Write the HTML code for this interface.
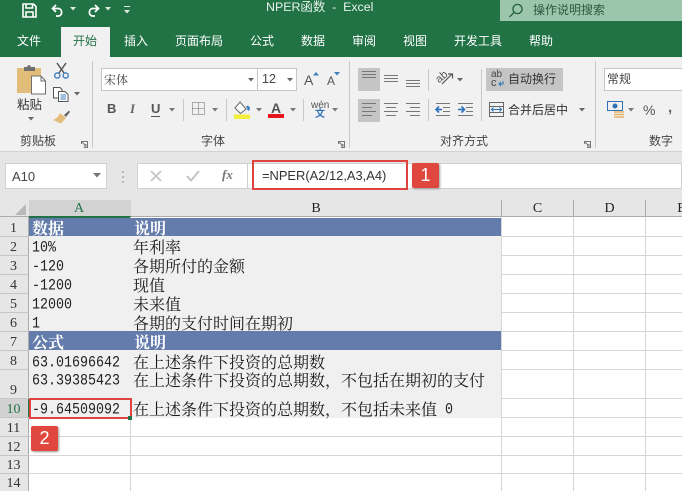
<!DOCTYPE html>
<html><head><meta charset="utf-8">
<style>
*{margin:0;padding:0;box-sizing:border-box}
html,body{width:682px;height:491px;overflow:hidden;background:#fff}
body{position:relative;font-family:"Liberation Sans","Noto Sans CJK SC",sans-serif;color:#333}
.a{position:absolute;white-space:nowrap}
.t{position:absolute;white-space:nowrap;color:#fff;font-size:12px;line-height:16px;top:33px}
.l{position:absolute;white-space:nowrap;color:#444;font-size:12px;line-height:14px}
.hl{position:absolute;background:#c9c9c9}
.gl{position:absolute;background:#d6d6d6}
.r{position:absolute;left:0;width:27px;text-align:center;font:14px/16px "Liberation Serif","Noto Serif CJK SC",serif;color:#333}
.c{position:absolute;white-space:nowrap;font:13.33px/18px "Liberation Mono","Noto Serif CJK SC",monospace;color:#222;transform:scaleY(1.2);transform-origin:left center}
.z{position:absolute;white-space:nowrap;font:16px/18px "Noto Serif CJK SC","Liberation Serif",serif;color:#1a1a1a;left:133px}
.w{color:#fff;font-weight:700;font-size:16px;left:32px}
.ch{position:absolute;top:201px;height:17px;text-align:center;font:14px/16px "Liberation Serif",serif;color:#222}
svg{position:absolute;overflow:visible}
</style></head><body>

<!-- title + tab strip -->
<div class="a" style="left:0;top:0;width:682px;height:57px;background:#217346"></div>
<div class="a" style="left:500px;top:0;width:182px;height:21px;background:#9cc6ac"></div>
<svg style="left:508px;top:2px" width="18" height="16" fill="none" stroke="#1f5f3c" stroke-width="1.3"><circle cx="9.5" cy="7" r="4.6"/><path d="M6 10.5 L1.5 15"/></svg>
<div class="a" style="left:533px;top:2px;font-size:12px;line-height:16px;color:#2c5a40">操作说明搜索</div>
<div class="a" style="left:266px;top:0;font-size:12.4px;line-height:15px;color:#e8f2ec">NPER函数&nbsp; -&nbsp; Excel</div>

<!-- QAT -->
<svg style="left:22px;top:3px" width="15" height="15" fill="none" stroke="#fff" stroke-width="1.6"><path d="M1 1H11.5L14 3.5V14H1Z"/><path d="M4 1V5H10.5V1"/><path d="M4 14V9H11V14"/></svg>
<svg style="left:51px;top:3px" width="14" height="14" fill="none" stroke="#fff" stroke-width="1.7"><path d="M5 2 L1.5 5.5 L5 9"/><path d="M2 5.5 H8 A4 4 0 0 1 8 13 H5"/></svg>
<svg style="left:70px;top:7px" width="6" height="4" fill="#dfe9e3"><path d="M0 0H6L3 3.5Z"/></svg>
<svg style="left:86px;top:3px" width="14" height="14" fill="none" stroke="#fff" stroke-width="1.7"><path d="M9 2 L12.5 5.5 L9 9"/><path d="M12 5.5 H6 A4 4 0 0 0 6 13 H9"/></svg>
<svg style="left:105px;top:7px" width="6" height="4" fill="#dfe9e3"><path d="M0 0H6L3 3.5Z"/></svg>
<svg style="left:124px;top:6px" width="7" height="8" fill="#dfe9e3"><path d="M0 0H6V1H0Z"/><path d="M0 4H6L3 7.5Z"/></svg>

<!-- tabs -->
<div class="a" style="left:61px;top:27px;width:49px;height:31px;background:#f1f1f1"></div>
<div class="t" style="left:17px">文件</div>
<div class="t" style="left:73px;color:#217346">开始</div>
<div class="t" style="left:124px">插入</div>
<div class="t" style="left:175px">页面布局</div>
<div class="t" style="left:250px">公式</div>
<div class="t" style="left:301px">数据</div>
<div class="t" style="left:352px">审阅</div>
<div class="t" style="left:403px">视图</div>
<div class="t" style="left:454px">开发工具</div>
<div class="t" style="left:529px">帮助</div>

<!-- ribbon -->
<div class="a" style="left:0;top:57px;width:682px;height:94px;background:#f1f1f1"></div>
<div class="a" style="left:0;top:151px;width:682px;height:1px;background:#d2d2d2"></div>
<div class="a" style="left:0;top:152px;width:682px;height:48px;background:#e6e6e6"></div>
<div class="hl" style="left:92px;top:61px;width:1px;height:87px"></div>
<div class="hl" style="left:349px;top:61px;width:1px;height:87px"></div>
<div class="hl" style="left:595px;top:61px;width:1px;height:87px"></div>

<!-- clipboard -->
<svg style="left:17px;top:65px" width="29" height="32">
<path d="M0 3H24V28H0Z" fill="#e2bd7a"/>
<path d="M7 2H10Q12-2 14 2H18V6H7Z" fill="#6f6f6f"/>
<path d="M14.5 11H24L28.500 16V29H14.5Z" fill="#fff" stroke="#6f6f6f"/>
<path d="M24 11V16H28.500" fill="none" stroke="#6f6f6f"/>
</svg>
<div class="l" style="left:17px;top:98px;font-size:12.5px;line-height:14px;color:#333">粘贴</div>
<svg style="left:28px;top:117px" width="7" height="4" fill="#666"><path d="M0 0H6L3 3.5Z"/></svg>
<svg style="left:54px;top:63px" width="15" height="16" fill="none">
<path d="M3 0 L10 10 M12 0 L5 10" stroke="#555" stroke-width="1.5"/>
<circle cx="3.3" cy="12.5" r="2.6" stroke="#3f7fbf" stroke-width="1.4"/><circle cx="11.7" cy="12.5" r="2.6" stroke="#3f7fbf" stroke-width="1.4"/>
</svg>
<svg style="left:53px;top:87px" width="16" height="15" fill="#fff" stroke="#555"><path d="M.5.5H7L9 2.5V11H.5Z"/><path d="M5.5 4.5H12L15 7.5V14.5H5.5Z"/><path d="M7.5 8H13M7.5 10H13M7.5 12H13" stroke="#3f7fbf"/></svg>
<svg style="left:74px;top:92px" width="7" height="4" fill="#666"><path d="M0 0H6L3 3.5Z"/></svg>
<svg style="left:53px;top:110px" width="17" height="14"><path d="M11 5 L16 0.5 L17 2 L13 7Z" fill="#666"/><path d="M7 3 L13 8 L8 13.5 L0 10 Q5 8 7 3Z" fill="#e2bd7a"/></svg>
<div class="l" style="left:20px;top:134px;color:#444">剪贴板</div>
<svg style="left:81px;top:141px" width="7" height="7" fill="none" stroke="#777"><path d="M.5 3V.5H6.5V6.5H3"/><path d="M1 1L5 5M3 5H5V3"/></svg>

<!-- font -->
<div class="a" style="left:101px;top:68px;width:196px;height:23px;background:#fff;border:1px solid #c6c6c6"></div>
<div class="a" style="left:257px;top:68px;width:1px;height:23px;background:#c6c6c6"></div>
<div class="a" style="left:104px;top:72px;font:12px/15px 'Noto Serif CJK SC',serif;color:#444">宋体</div>
<svg style="left:248px;top:78px" width="7" height="4" fill="#666"><path d="M0 0H6L3 3.5Z"/></svg>
<div class="a" style="left:262px;top:72px;font-size:12.500px;line-height:15px;color:#444">12</div>
<svg style="left:287px;top:78px" width="7" height="4" fill="#666"><path d="M0 0H6L3 3.5Z"/></svg>
<div class="a" style="left:304px;top:71px;font-size:14px;line-height:18px;color:#555">A</div>
<svg style="left:313px;top:72px" width="6" height="4" fill="#3f7fbf"><path d="M0 3.5H6L3 0Z"/></svg>
<div class="a" style="left:327px;top:74px;font-size:12px;line-height:15px;color:#555">A</div>
<svg style="left:334px;top:72px" width="6" height="4" fill="#3f7fbf"><path d="M0 0H6L3 3.5Z"/></svg>
<div class="a" style="left:107px;top:101px;font-size:13px;line-height:16px;font-weight:700;color:#555">B</div>
<div class="a" style="left:130px;top:101px;font:italic 700 13px/16px 'Liberation Serif',serif;color:#666">I</div>
<div class="a" style="left:151px;top:101px;font-size:13px;line-height:15px;font-weight:700;color:#555;border-bottom:1px solid #555">U</div>
<svg style="left:169px;top:108px" width="7" height="4" fill="#777"><path d="M0 0H6L3 3.5Z"/></svg>
<div class="hl" style="left:183px;top:99px;width:1px;height:22px"></div>
<svg style="left:192px;top:102px" width="13" height="13" fill="none" stroke="#666" stroke-dasharray="1 1"><path d="M.5.5H12.5V12.5H.5ZM6.5.5V12.5M.5 6.5H12.5"/></svg>
<svg style="left:212px;top:108px" width="7" height="4" fill="#777"><path d="M0 0H6L3 3.5Z"/></svg>
<div class="hl" style="left:226px;top:99px;width:1px;height:22px"></div>
<svg style="left:234px;top:101px" width="17" height="18"><path d="M6 1 L12 8 L6.5 12.5 L1 7Z" fill="#fff" stroke="#666"/><path d="M12 5Q15 4 16 7Q16 9 14 10Z" fill="#3f7fbf"/><rect x="0" y="13.500" width="16" height="4.500" fill="#f3ee3a"/></svg>
<svg style="left:256px;top:108px" width="7" height="4" fill="#777"><path d="M0 0H6L3 3.5Z"/></svg>
<div class="a" style="left:271px;top:100px;font-size:14px;line-height:16px;font-weight:700;color:#555">A</div>
<div class="a" style="left:268px;top:114px;width:16px;height:4px;background:#e5141d"></div>
<svg style="left:290px;top:108px" width="7" height="4" fill="#777"><path d="M0 0H6L3 3.5Z"/></svg>
<div class="hl" style="left:303px;top:99px;width:1px;height:22px"></div>
<div class="a" style="left:311px;top:100px;font-size:10px;line-height:12px;color:#555">wén</div>
<div class="a" style="left:315px;top:109px;font-size:10px;line-height:12px;color:#2d72b8;font-weight:700">文</div>
<svg style="left:332px;top:108px" width="7" height="4" fill="#777"><path d="M0 0H6L3 3.5Z"/></svg>
<div class="l" style="left:201px;top:134px">字体</div>
<svg style="left:338px;top:141px" width="7" height="7" fill="none" stroke="#777"><path d="M.5 3V.5H6.5V6.5H3"/><path d="M1 1L5 5M3 5H5V3"/></svg>

<!-- alignment -->
<div class="a" style="left:358px;top:68px;width:22px;height:23px;background:#c5c5c5"></div>
<div class="a" style="left:358px;top:99px;width:22px;height:23px;background:#c5c5c5"></div>
<svg style="left:361px;top:71px" width="90" height="17" fill="none" stroke="#777">
<path d="M1 .5H15M1 3.500H15M1 6.500H15"/><path d="M23 4.500H37M23 7.500H37M23 10.500H37"/><path d="M45 9.500H59M45 12.500H59M45 15.500H59"/></svg>
<svg style="left:361px;top:103px" width="90" height="14" fill="none" stroke="#777">
<path d="M1 .5H15M1 4.500H11M1 8.500H15M1 12.500H11"/><path d="M23 .5H37M25 4.500H35M23 8.500H37M25 12.500H35"/><path d="M45 .5H59M49 4.500H59M45 8.500H59M49 12.500H59"/></svg>
<div class="hl" style="left:428px;top:69px;width:1px;height:22px"></div>
<div class="hl" style="left:428px;top:99px;width:1px;height:22px"></div>
<div class="a" style="left:436px;top:71px;font-size:11px;line-height:13px;color:#555;transform:rotate(-40deg)">ab</div>
<svg style="left:441px;top:72px" width="13" height="13" fill="none" stroke="#555" stroke-width="1.2"><path d="M1 12L11 2M7 2H11.500V6.500"/></svg>
<svg style="left:457px;top:78px" width="6" height="4" fill="#666"><path d="M0 0H6L3 3.5Z"/></svg>
<svg style="left:436px;top:103px" width="14" height="13" fill="none" stroke="#777"><path d="M0 .5H14M7 4.500H14M7 8.500H14M0 12.500H14"/><path d="M0 6.500H6" stroke="#2d72b8" stroke-width="1.600"/><path d="M3 3.500L0 6.500L3 9.500" stroke="#2d72b8" stroke-width="1.600"/></svg>
<svg style="left:458px;top:103px" width="15" height="13" fill="none" stroke="#777"><path d="M0 .5H15M8 4.500H15M8 8.500H15M0 12.500H15"/><path d="M0 6.500H6" stroke="#2d72b8" stroke-width="1.600"/><path d="M3.500 3.500L6.500 6.500L3.500 9.500" stroke="#2d72b8" stroke-width="1.600"/></svg>
<div class="hl" style="left:481px;top:69px;width:1px;height:52px"></div>
<div class="a" style="left:486px;top:68px;width:77px;height:23px;background:#c5c5c5"></div>
<div class="a" style="left:491px;top:70px;font-size:10px;line-height:10px;color:#444">ab</div>
<div class="a" style="left:491px;top:78px;font-size:11px;line-height:10px;color:#444">c</div>
<svg style="left:498px;top:81px" width="6" height="5" fill="none" stroke="#2d72b8"><path d="M5 0V3H1M3 1L1 3L3 5"/></svg>
<div class="a" style="left:508px;top:72px;font-size:12px;line-height:15px;color:#333">自动换行</div>
<svg style="left:489px;top:102px" width="15" height="15" fill="none" stroke="#666"><path d="M.5.5H14.500V14.500H.5ZM.5 4.500H14.500M.5 10.500H14.500"/><path d="M2.500 7.500H12.500M4.500 5.500L2.500 7.500L4.500 9.500M10.500 5.500L12.500 7.500L10.500 9.500" stroke="#2d72b8"/></svg>
<div class="a" style="left:508px;top:103px;font-size:12px;line-height:15px;color:#333">合并后居中</div>
<svg style="left:579px;top:108px" width="7" height="4" fill="#666"><path d="M0 0H6L3 3.5Z"/></svg>
<div class="l" style="left:440px;top:134px">对齐方式</div>
<svg style="left:584px;top:141px" width="7" height="7" fill="none" stroke="#777"><path d="M.5 3V.5H6.5V6.5H3"/><path d="M1 1L5 5M3 5H5V3"/></svg>

<!-- number -->
<div class="a" style="left:604px;top:68px;width:90px;height:23px;background:#fff;border:1px solid #c6c6c6"></div>
<div class="a" style="left:607px;top:72px;font-size:12px;line-height:15px;color:#444">常规</div>
<svg style="left:607px;top:101px" width="17" height="17"><rect x=".5" y=".5" width="15" height="9" fill="none" stroke="#2d72b8"/><circle cx="8" cy="5" r="2.500" fill="#2d72b8"/><path d="M7 11H17M7 13.500H17M7 16H17" stroke="#e2a94f" stroke-width="1.300"/></svg>
<svg style="left:628px;top:108px" width="7" height="4" fill="#777"><path d="M0 0H6L3 3.5Z"/></svg>
<div class="a" style="left:643px;top:102px;font-size:14px;line-height:16px;color:#555">%</div>
<div class="a" style="left:668px;top:100px;font-size:15px;line-height:16px;font-weight:700;color:#666">,</div>
<div class="l" style="left:649px;top:134px">数字</div>

<!-- formula bar -->
<div class="a" style="left:5px;top:163px;width:102px;height:26px;background:#fff;border:1px solid #d0d0d0"></div>
<div class="a" style="left:12px;top:169px;font-size:13px;line-height:15px;color:#444">A10</div>
<svg style="left:93px;top:173px" width="8" height="5" fill="#777"><path d="M0 0H8L4 4.500Z"/></svg>
<div class="a" style="left:122px;top:171px;width:2px;height:2px;background:#bbb;box-shadow:0 5px 0 #bbb,0 10px 0 #bbb"></div>
<div class="a" style="left:137px;top:163px;width:545px;height:26px;background:#fff;border:1px solid #d0d0d0"></div>
<div class="a" style="left:247px;top:163px;width:1px;height:26px;background:#d0d0d0"></div>
<svg style="left:150px;top:170px" width="12" height="12" fill="none" stroke="#c4c4c4" stroke-width="1.800"><path d="M1 1L11 11M11 1L1 11"/></svg>
<svg style="left:186px;top:170px" width="14" height="12" fill="none" stroke="#c4c4c4" stroke-width="2"><path d="M1 6L5 10.500L13 1"/></svg>
<div class="a" style="left:222px;top:167px;font:italic 700 13px/16px 'Liberation Serif',serif;color:#777">fx</div>
<div class="a" style="left:262px;top:168px;font-size:12.900px;line-height:16px;color:#333">=NPER(A2/12,A3,A4)</div>
<div class="a" style="left:252px;top:160px;width:156px;height:30px;border:2px solid #e0433d"></div>
<div class="a" style="left:412px;top:163px;width:27px;height:25px;background:#e0483f;border-radius:2px;box-shadow:1px 1px 2px #999;color:#fff;font-size:18px;line-height:25px;text-align:center">1</div>

<!-- column headers -->
<div class="a" style="left:0;top:200px;width:682px;height:17px;background:#e6e6e6"></div>
<div class="a" style="left:0;top:216px;width:682px;height:1px;background:#ababab"></div>
<div class="a" style="left:29px;top:200px;width:102px;height:17px;background:#d2d2d2"></div>
<div class="a" style="left:29px;top:216px;width:102px;height:2px;background:#217346"></div>
<svg style="left:15px;top:204px" width="11" height="11" fill="#b9b9b9"><path d="M11 0V11H0Z"/></svg>
<div class="ch" style="left:29px;width:100px;color:#217346">A</div>
<div class="ch" style="left:131px;width:370px">B</div>
<div class="ch" style="left:502px;width:71px">C</div>
<div class="ch" style="left:574px;width:71px">D</div>
<div class="ch" style="left:646px;width:71px">E</div>
<div class="a" style="left:501px;top:200px;width:1px;height:17px;background:#ababab"></div>
<div class="a" style="left:573px;top:200px;width:1px;height:17px;background:#ababab"></div>
<div class="a" style="left:645px;top:200px;width:1px;height:17px;background:#ababab"></div>

<!-- row headers -->
<div class="a" style="left:0;top:217px;width:29px;height:274px;background:#e6e6e6;border-right:1px solid #ababab"></div>
<div class="a" style="left:0;top:398px;width:29px;height:19px;background:#d2d2d2;border-right:1px solid #217346"></div>
<div class="gl" style="left:0;top:236px;width:29px;height:1px;background:#c6c6c6;box-shadow:0 19px 0 #c6c6c6,0 38px 0 #c6c6c6,0 57px 0 #c6c6c6,0 76px 0 #c6c6c6,0 95px 0 #c6c6c6,0 114px 0 #c6c6c6,0 133px 0 #c6c6c6,0 162px 0 #c6c6c6,0 181px 0 #c6c6c6,0 200px 0 #c6c6c6,0 219px 0 #c6c6c6,0 237px 0 #c6c6c6"></div>
<div class="r" style="top:221px">1</div><div class="r" style="top:240px">2</div><div class="r" style="top:259px">3</div><div class="r" style="top:278px">4</div><div class="r" style="top:297px">5</div><div class="r" style="top:316px">6</div><div class="r" style="top:335px">7</div><div class="r" style="top:354px">8</div><div class="r" style="top:383px">9</div><div class="r" style="top:402px;color:#217346">10</div><div class="r" style="top:421px">11</div><div class="r" style="top:440px">12</div><div class="r" style="top:458px">13</div><div class="r" style="top:476px">14</div>

<!-- grid -->
<div class="gl" style="left:130px;top:217px;width:1px;height:274px"></div>
<div class="gl" style="left:501px;top:217px;width:1px;height:274px"></div>
<div class="gl" style="left:573px;top:217px;width:1px;height:274px"></div>
<div class="gl" style="left:645px;top:217px;width:1px;height:274px"></div>
<div class="gl" style="left:29px;top:236px;width:653px;height:1px"></div>
<div class="gl" style="left:29px;top:255px;width:653px;height:1px"></div>
<div class="gl" style="left:29px;top:274px;width:653px;height:1px"></div>
<div class="gl" style="left:29px;top:293px;width:653px;height:1px"></div>
<div class="gl" style="left:29px;top:312px;width:653px;height:1px"></div>
<div class="gl" style="left:29px;top:331px;width:653px;height:1px"></div>
<div class="gl" style="left:29px;top:350px;width:653px;height:1px"></div>
<div class="gl" style="left:29px;top:369px;width:653px;height:1px"></div>
<div class="gl" style="left:29px;top:398px;width:653px;height:1px"></div>
<div class="gl" style="left:29px;top:417px;width:653px;height:1px"></div>
<div class="gl" style="left:29px;top:436px;width:653px;height:1px"></div>
<div class="gl" style="left:29px;top:455px;width:653px;height:1px"></div>
<div class="gl" style="left:29px;top:473px;width:653px;height:1px"></div>

<!-- filled cells -->
<div class="a" style="left:29px;top:218px;width:472px;height:18px;background:#647cab"></div>
<div class="a" style="left:29px;top:236px;width:472px;height:95px;background:#f0f0f0"></div>
<div class="a" style="left:29px;top:331px;width:472px;height:19px;background:#647cab"></div>
<div class="a" style="left:29px;top:350px;width:472px;height:68px;background:#f0f0f0"></div>

<!-- cell text -->
<div class="z w" style="top:219px">数据</div><div class="z w" style="top:219px;left:134px">说明</div>
<div class="c" style="left:32px;top:240px">10%</div><div class="z" style="top:238px">年利率</div>
<div class="c" style="left:32px;top:259px">-120</div><div class="z" style="top:257px">各期所付的金额</div>
<div class="c" style="left:32px;top:278px">-1200</div><div class="z" style="top:276px">现值</div>
<div class="c" style="left:32px;top:297px">12000</div><div class="z" style="top:295px">未来值</div>
<div class="c" style="left:32px;top:316px">1</div><div class="z" style="top:314px">各期的支付时间在期初</div>
<div class="z w" style="top:333px">公式</div><div class="z w" style="top:333px;left:134px">说明</div>
<div class="c" style="left:32px;top:355px">63.01696642</div><div class="z" style="top:353px">在上述条件下投资的总期数</div>
<div class="c" style="left:32px;top:373px">63.39385423</div><div class="z" style="top:371px">在上述条件下投资的总期数，不包括在期初的支付</div>
<div class="c" style="left:32px;top:402px">-9.64509092</div><div class="z" style="top:400px">在上述条件下投资的总期数，不包括未来值</div>
<div class="c" style="left:445px;top:402px">0</div>

<!-- annotations -->
<div class="a" style="left:29px;top:398px;width:103px;height:21px;border:2px solid #e0433d"></div>
<div class="a" style="left:128px;top:416px;width:4px;height:4px;background:#217346"></div>
<div class="a" style="left:31px;top:426px;width:27px;height:25px;background:#e0483f;border-radius:2px;box-shadow:1px 1px 2px #999;color:#fff;font-size:18px;line-height:25px;text-align:center">2</div>
</body></html>
